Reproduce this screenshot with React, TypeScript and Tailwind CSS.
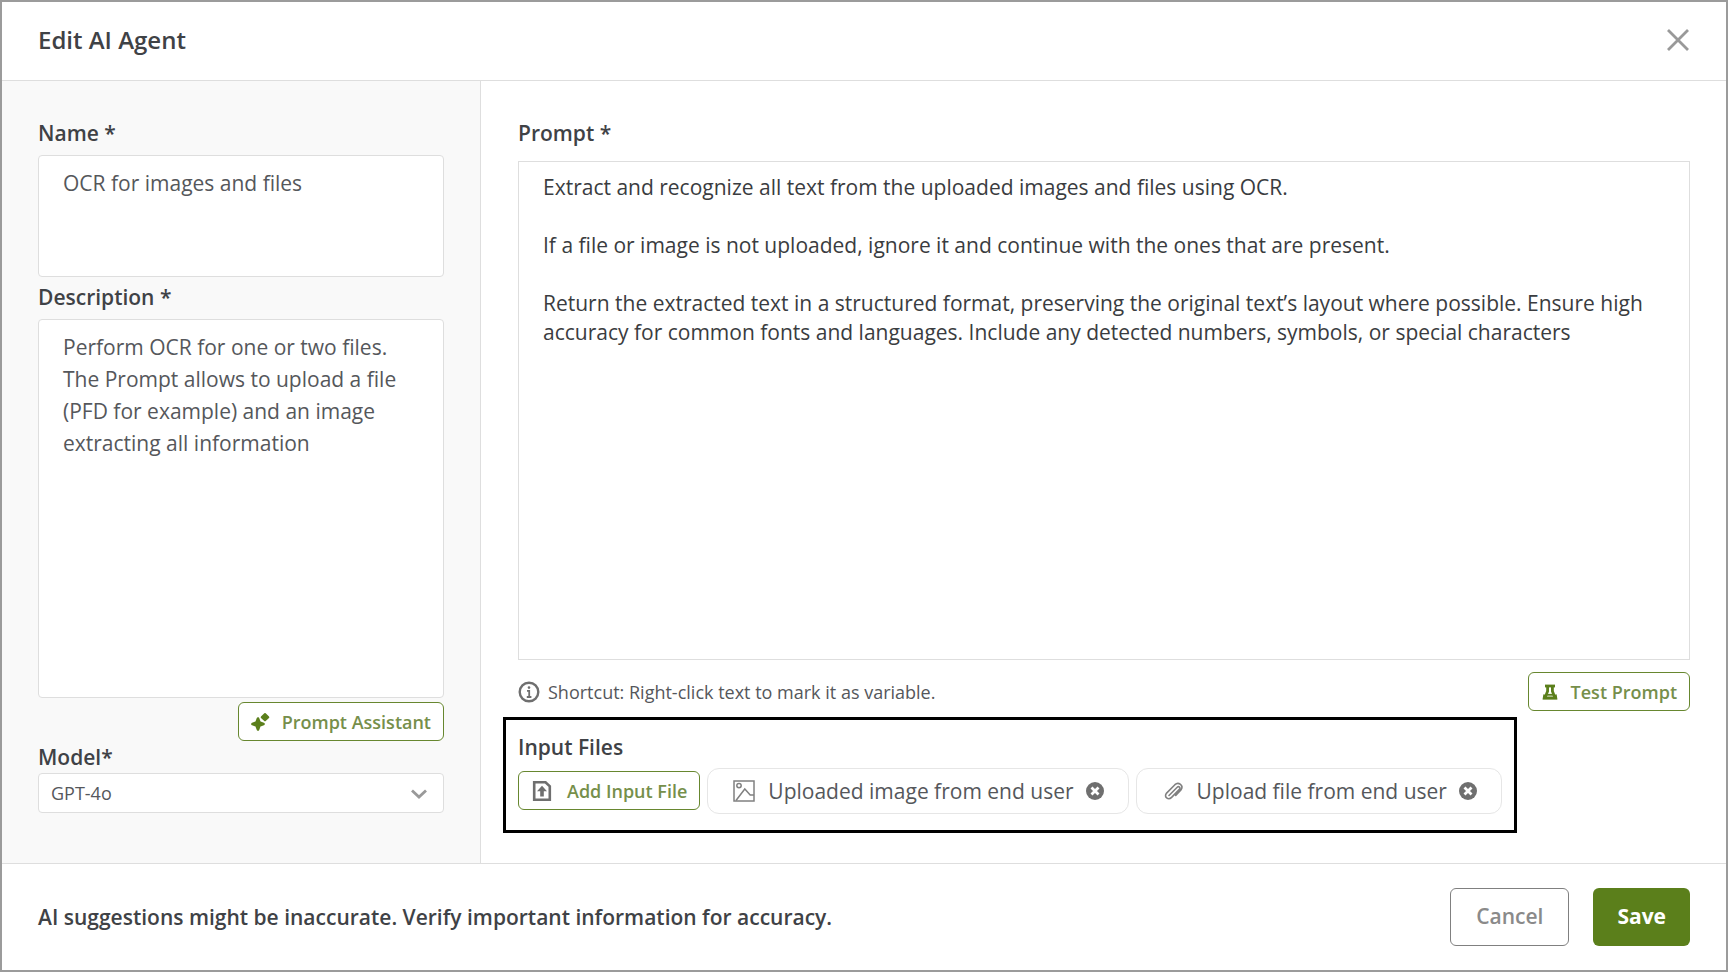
import { useState, type ReactNode } from "react";

const PROMPT = `Extract and recognize all text from the uploaded images and files using OCR.

If a file or image is not uploaded, ignore it and continue with the ones that are present.

Return the extracted text in a structured format, preserving the original text’s layout where possible. Ensure high accuracy for common fonts and languages. Include any detected numbers, symbols, or special characters`;

const DESCRIPTION =
  "Perform OCR for one or two files. The Prompt allows to upload a file (PFD for example) and an image extracting all information";

const INPUT_FILES = [
  { id: "image", label: "Uploaded image from end user", icon: <ImageIcon /> },
  { id: "file", label: "Upload file from end user", icon: <ClipIcon /> },
];

export default function EditAgentDialog() {
  const [name, setName] = useState("OCR for images and files");
  const [description, setDescription] = useState(DESCRIPTION);
  const [prompt, setPrompt] = useState(PROMPT);
  const [model, setModel] = useState("GPT-4o");
  const [files, setFiles] = useState(INPUT_FILES);

  return (
    <div className="flex min-h-screen flex-col border-2 border-[#9b9b9b] bg-white font-['Open_Sans',sans-serif] text-[#3f4246]">
      <header className="flex h-[79px] items-center justify-between border-b border-[#dedede] px-9 pb-0.5">
        <h1 className="text-2xl font-semibold">Edit AI Agent</h1>
        <button type="button" aria-label="Close" className="text-[#999999]">
          <CloseIcon />
        </button>
      </header>

      <main className="flex flex-1">
        {/* Left column */}
        <div className="flex w-[479px] shrink-0 flex-col border-r border-[#dedede] bg-[#f9f9f9] px-9 pt-9 pb-[50px]">
          <FieldLabel htmlFor="name">Name *</FieldLabel>
          <textarea
            id="name"
            value={name}
            onChange={(e) => setName(e.target.value)}
            className="mt-1.5 h-[122px] shrink-0 resize-none rounded-sm border border-[#dedede] bg-white px-6 py-[11px] text-[21px] leading-8 text-[#55575b] outline-none"
          />
          <FieldLabel htmlFor="description" className="mt-1">
            Description *
          </FieldLabel>
          <textarea
            id="description"
            value={description}
            onChange={(e) => setDescription(e.target.value)}
            className="mt-1.5 flex-1 resize-none rounded-sm border border-[#dedede] bg-white px-6 py-[11px] text-[21px] leading-8 text-[#55575b] outline-none"
          />
          <OutlineButton className="mt-1 self-end">
            <SparkleIcon />
            Prompt Assistant
          </OutlineButton>
          <FieldLabel htmlFor="model">Model*</FieldLabel>
          <div className="relative">
            <select
              id="model"
              value={model}
              onChange={(e) => setModel(e.target.value)}
              className="h-10 w-full appearance-none rounded-sm border border-[#dedede] bg-white px-3 text-lg leading-6 text-[#55575b] outline-none"
            >
              <option>GPT-4o</option>
            </select>
            <svg
              viewBox="0 0 16 10"
              className="pointer-events-none absolute top-4 right-4 h-[10px] w-[18px]"
              fill="none"
              stroke="#999999"
              strokeWidth="2.8"
            >
              <path d="M1 1.400 8 8l7-6.600" />
            </svg>
          </div>
        </div>

        {/* Right column */}
        <div className="flex min-w-0 flex-1 flex-col pt-9 pr-9 pb-[30px] pl-[37px]">
          <FieldLabel htmlFor="prompt">Prompt *</FieldLabel>
          <textarea
            id="prompt"
            value={prompt}
            onChange={(e) => setPrompt(e.target.value)}
            className="mt-3 flex-1 resize-none border border-[#dedede] bg-white px-6 py-[11px] text-[21px] leading-[29px] text-[#3a3c40] outline-none"
          />
          <div className="mt-3 flex items-center justify-between">
            <p className="flex items-center gap-2 text-lg leading-6 text-[#55575b]">
              <InfoIcon />
              Shortcut: Right-click text to mark it as variable.
            </p>
            <OutlineButton>
              <FlaskIcon />
              Test Prompt
            </OutlineButton>
          </div>

          <section className="mt-1.5 -ml-[15px] self-start border-[3px] border-black px-3 pt-[11px] pb-4">
            <h2 className="text-[21px] leading-8 font-semibold">Input Files</h2>
            <div className="mt-[5px] flex items-start gap-[7px]">
              <OutlineButton className="mt-[3px]">
                <FileUpIcon />
                Add Input File
              </OutlineButton>
              {files.map((file) => (
                <div
                  key={file.id}
                  className="flex h-[46px] items-center gap-3 rounded-xl border border-[#e6e6e6] px-6 text-[21px] leading-8 text-[#55575b]"
                >
                  {file.icon}
                  {file.label}
                  <button
                    type="button"
                    aria-label={`Remove ${file.label}`}
                    onClick={() => setFiles(files.filter((f) => f.id !== file.id))}
                  >
                    <RemoveIcon />
                  </button>
                </div>
              ))}
            </div>
          </section>
        </div>
      </main>

      <footer className="flex h-[107px] items-center justify-between border-t border-[#dedede] px-9">
        <p className="text-[21px] leading-8 font-semibold">
          AI suggestions might be inaccurate. Verify important information for accuracy.
        </p>
        <div className="flex gap-6">
          <button
            type="button"
            className="h-[58px] rounded-md border border-[#808080] bg-white px-[25px] text-[21px] font-semibold text-[#8a8a8a]"
          >
            Cancel
          </button>
          <button type="button" className="h-[58px] rounded-md bg-[#5b7f1b] px-6 text-[21px] font-bold text-white">
            Save
          </button>
        </div>
      </footer>
    </div>
  );
}

function FieldLabel({
  htmlFor,
  className = "",
  children,
}: {
  htmlFor: string;
  className?: string;
  children: ReactNode;
}) {
  return (
    <label htmlFor={htmlFor} className={`text-[21px] leading-8 font-semibold ${className}`}>
      {children}
    </label>
  );
}

function OutlineButton({ className = "", children }: { className?: string; children: ReactNode }) {
  return (
    <button
      type="button"
      className={`flex h-[39px] items-center gap-3 rounded-md border border-[#67872f] bg-white px-3 text-lg leading-6 font-semibold text-[#768f4b] ${className}`}
    >
      {children}
    </button>
  );
}

function CloseIcon() {
  return (
    <svg width="24" height="24" viewBox="0 0 24 24" fill="none" stroke="currentColor" strokeWidth="2.8">
      <path d="M2 2l20 20M22 2L2 22" />
    </svg>
  );
}

function SparkleIcon() {
  return (
    <svg width="19" height="19" viewBox="0 0 19 19" fill="#5b7f1b" stroke="#5b7f1b" strokeLinejoin="round">
      <path d="M7 6.500L8.500 10.500 12.500 12 8.500 13.500 7 17.500 5.500 13.500 1.500 12 5.500 10.500z" strokeWidth="2.600" />
      <path d="M14 2L17.300 5.200 14 8.400 10.700 5.200z" strokeWidth="2" />
    </svg>
  );
}

function FlaskIcon() {
  return (
    <svg width="18" height="18" viewBox="0 0 18 18" fill="none" stroke="#5b7f1b">
      <path d="M4 3h10" strokeWidth="2.800" />
      <path d="M6.600 3v5.200L4 14.800h10L11.400 8.200V3" strokeWidth="2.800" />
      <path d="M3.300 11.500L2.600 15.600h12.800l-.700-4.100" strokeWidth="1.800" />
      <path d="M6 11.800h6" strokeWidth="1.800" />
    </svg>
  );
}

function InfoIcon() {
  return (
    <svg width="22" height="22" viewBox="0 0 22 22" fill="none" stroke="#6f6f6f">
      <circle cx="11" cy="11" r="9.300" strokeWidth="2.400" />
      <path d="M9 9.800h2.200V16M8.800 16h4.600" strokeWidth="1.800" />
      <circle cx="11" cy="6.600" r="1.300" fill="#6f6f6f" stroke="none" />
    </svg>
  );
}

function FileUpIcon() {
  return (
    <svg width="24" height="22" viewBox="0 0 24 22" fill="none" stroke="#6f6f6f">
      <path d="M3.200 2.200h11.300l4.300 4v13.600H3.200z" strokeWidth="2.600" />
      <path d="M11 5.800l5 5.400h-3.200V16.400H9.200v-5.200H6z" fill="#6f6f6f" stroke="none" />
    </svg>
  );
}

function ImageIcon() {
  return (
    <svg width="24" height="22" viewBox="0 0 24 22" fill="none" stroke="#808080" strokeWidth="1.500">
      <rect x="2" y="1" width="20" height="20" />
      <circle cx="7" cy="5.600" r="2.200" />
      <path d="M4 20.500L12.800 9 18.200 15H22" />
    </svg>
  );
}

function ClipIcon() {
  return (
    <svg width="24" height="20" viewBox="0 0 24 20" fill="none" stroke="#808080" strokeWidth="1.600" strokeLinecap="round">
      <path d="M8 14.500l8.200-8.200c1.600-1.600 3.800.4 2.200 2.100l-7.800 8c-3.200 3.200-8.300-.3-5-4.300l8.300-8.400c3.500-3.300 9.300.7 6 5.300l-5.200 5.500" />
    </svg>
  );
}

function RemoveIcon() {
  return (
    <svg width="18" height="18" viewBox="0 0 18 18">
      <circle cx="9" cy="9" r="9" fill="#6f6f6f" />
      <path d="M5.500 5.500l7 7M12.500 5.500l-7 7" stroke="#ffffff" strokeWidth="2.800" />
    </svg>
  );
}
